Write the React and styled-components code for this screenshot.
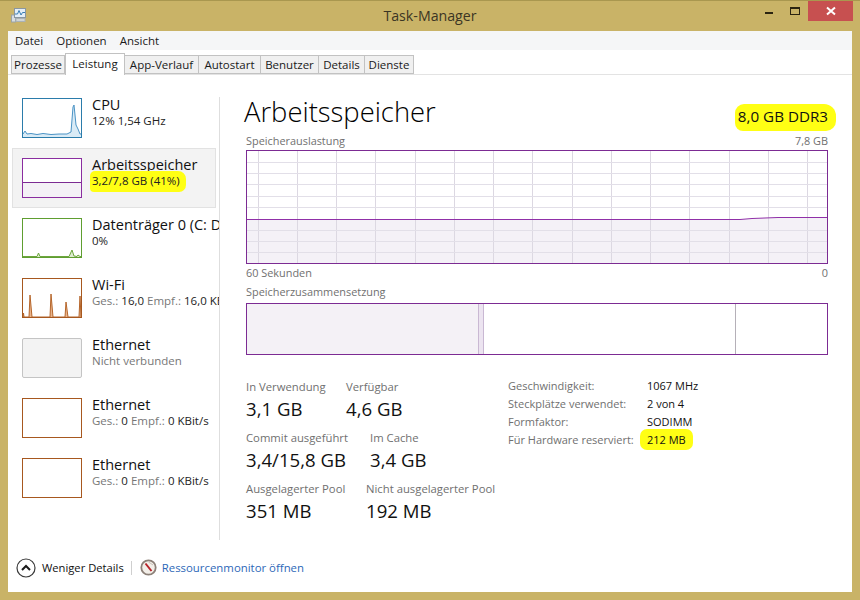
import React from "react";
import styled, { createGlobalStyle } from "styled-components";

const GlobalStyle = createGlobalStyle`
  html, body {
    margin: 0;
    padding: 0;
    background: #c9b367;
  }
  body {
    font-family: "Open Sans", "Noto Sans", "Liberation Sans", sans-serif;
    font-size: 11.5px;
    color: #111;
    overflow: hidden;
  }
`;

const Window = styled.div`
  width: 860px;
  height: 600px;
  box-sizing: border-box;
  display: flex;
  flex-direction: column;
  background: #c9b367;
  border-top: 1px solid #a9974f;
`;

const TitleBar = styled.div`
  height: 30px;
  flex: none;
  display: grid;
  grid-template-columns: 1fr auto 1fr;
`;

const AppIcon = styled.div`
  padding: 5px 0 0 10px;
`;

const TitleText = styled.div`
  font-size: 14.2px;
  line-height: 29px;
  color: #3b3524;
`;

const Controls = styled.div`
  display: flex;
  justify-content: flex-end;
  padding-right: 7px;
`;

const ControlButton = styled.div`
  width: ${(p) => p.$w}px;
  height: 20px;
  display: flex;
  align-items: center;
  justify-content: center;
  background: ${(p) => (p.$close ? "#c75050" : "transparent")};
`;

const Body = styled.div`
  flex: 1;
  margin: 0 8px 8px;
  min-height: 0;
  display: flex;
  flex-direction: column;
  background: #fff;
`;

const MenuBar = styled.div`
  height: 19px;
  flex: none;
  display: flex;
  align-items: center;
  gap: 13px;
  padding-left: 7px;
  background: #f5f6f7;
  font-size: 11.5px;
  color: #1a1a1a;
`;

const Tabs = styled.div`
  height: 25px;
  flex: none;
  display: flex;
  align-items: flex-end;
  padding-left: 3px;
  border-bottom: 1px solid #e3e3e3;
  box-sizing: border-box;
`;

const Tab = styled.div`
  width: ${(p) => p.$w}px;
  height: ${(p) => (p.$active ? 22 : 19)}px;
  box-sizing: border-box;
  margin-bottom: ${(p) => (p.$active ? -1 : 0)}px;
  padding-bottom: ${(p) => (p.$active ? 3 : 0)}px;
  display: flex;
  align-items: center;
  justify-content: center;
  font-size: 11.5px;
  color: #1a1a1a;
  background: ${(p) => (p.$active ? "#fff" : "#f0f0f0")};
  border: 1px solid #c2c2c2;
  border-bottom: ${(p) => (p.$active ? "none" : "1px solid #c2c2c2")};
  border-left-width: ${(p) => (p.$active ? 1 : 0)}px;
  &:first-child {
    border-left-width: 1px;
  }
`;

const Content = styled.div`
  flex: 1;
  min-height: 0;
  display: flex;
`;

const Sidebar = styled.div`
  width: 212px;
  height: 443px;
  flex: none;
  box-sizing: border-box;
  margin-top: 22px;
  padding-left: 4px;
  border-right: 1px solid #dedede;
`;

const SideList = styled.div`
  margin-top: -9px;
  display: flex;
  flex-direction: column;
`;

const SideItem = styled.div`
  width: 204px;
  height: 60px;
  box-sizing: border-box;
  display: flex;
  gap: 8px;
  padding: 6px 0 0 10px;
  background: ${(p) => (p.$selected ? "#f3f3f3" : "transparent")};
  outline: ${(p) => (p.$selected ? "1px solid #e2e2e2" : "none")};
  outline-offset: -1px;
`;

const MiniGraph = styled.div`
  width: 60px;
  height: 40px;
  flex: none;
  box-sizing: border-box;
  margin-top: 4px;
  border: 1px solid ${(p) => p.$color};
  border-radius: ${(p) => (p.$off ? 2 : 0)}px;
  background: ${(p) => (p.$off ? "#f3f3f3" : "#fff")};
  svg {
    display: block;
  }
`;

const SideText = styled.div`
  width: 129px;
  height: 48px;
  flex: none;
  padding-left: 2px;
  box-sizing: border-box;
  overflow: hidden;
  white-space: nowrap;
`;

const SideName = styled.div`
  font-size: 14.5px;
  line-height: 21px;
  color: #111;
`;

const SideSub = styled.div`
  font-size: 11.5px;
  line-height: 16px;
  margin-top: -2px;
  color: ${(p) => (p.$muted ? "#777" : "#222")};
`;

const Muted = styled.span`
  color: #777;
`;

const Mark = styled.span`
  display: inline-block;
  background: #ffff14;
  border-radius: ${(p) => p.$radius || "6px"};
  padding: ${(p) => p.$pad};
  margin: ${(p) => p.$margin};
`;

const Main = styled.div`
  flex: 1;
  min-width: 0;
  padding: 19px 24px 0 26px;
`;

const TitleRow = styled.div`
  display: flex;
  justify-content: space-between;
  align-items: center;
  height: 34px;
  margin-bottom: 5px;
`;

const PageTitle = styled.div`
  font-size: 27.4px;
  font-weight: 300;
  margin-left: -2px;
  color: #000;
`;

const TypeLabel = styled.div`
  font-size: 15.2px;
  margin-top: 9px;
  color: #111;
`;

const GraphCaption = styled.div`
  display: flex;
  justify-content: space-between;
  height: 15px;
  margin-top: ${(p) => p.$top || 0}px;
  margin-bottom: ${(p) => p.$bottom || 0}px;
  font-size: 10.9px;
  line-height: 15px;
  color: #707070;
`;

const BigGraph = styled.div`
  height: 114px;
  box-sizing: border-box;
  border: 1px solid #7c2b93;
  svg {
    display: block;
  }
`;

const CompositionBar = styled.div`
  height: 52px;
  box-sizing: border-box;
  border: 1px solid #7c2b93;
  display: flex;
`;

const Segment = styled.div`
  width: ${(p) => p.$w}px;
  flex: ${(p) => (p.$grow ? 1 : "none")};
  box-sizing: border-box;
  background: ${(p) => p.$bg};
  border-right: ${(p) => (p.$line ? `1px solid ${p.$line}` : "none")};
`;

const Stats = styled.div`
  display: flex;
  margin-top: 24px;
`;

const StatColumn = styled.div`
  width: 262px;
  flex: none;
`;

const StatRow = styled.div`
  display: flex;
  height: 51px;
`;

const Stat = styled.div`
  width: ${(p) => p.$w}px;
  flex: none;
`;

const StatLabel = styled.div`
  font-size: 11.3px;
  line-height: 16px;
  color: #707070;
  white-space: nowrap;
`;

const StatValue = styled.div`
  font-size: 18.6px;
  line-height: 26px;
  margin-top: 1px;
  color: #111;
  white-space: nowrap;
`;

const Details = styled.div`
  display: grid;
  grid-template-columns: 139px auto;
  grid-auto-rows: 18px;
  align-items: center;
  align-self: flex-start;
  margin-top: -3px;
  font-size: 11px;
`;

const DetailLabel = styled.div`
  color: #707070;
  white-space: nowrap;
`;

const DetailValue = styled.div`
  color: #111;
  white-space: nowrap;
`;

const Footer = styled.div`
  height: 52px;
  flex: none;
  display: flex;
  align-items: center;
  padding: 3px 0 0 8px;
  box-sizing: border-box;
  font-size: 11.2px;
`;

const FooterLabel = styled.div`
  margin-left: 6px;
`;

const FooterDivider = styled.div`
  width: 1px;
  height: 14px;
  background: #cfcfcf;
  margin: 0 8px 0 7px;
`;

const FooterLink = styled.div`
  margin-left: 5px;
  font-size: 11.4px;
  color: #2d68b8;
`;

const TABS = [
  ["Prozesse", 54],
  ["Leistung", 60, true],
  ["App-Verlauf", 74],
  ["Autostart", 62],
  ["Benutzer", 58],
  ["Details", 46],
  ["Dienste", 49],
];

const GRID_X = Array.from({ length: 15 }, (_, i) => 10.5 + i * 39.27);
const GRID_Y = [11, 22, 33, 45, 56, 79, 90, 101];

function Spikes({ color, fill, points }) {
  const d = points.join(" ");
  return (
    <svg width="58" height="38" viewBox="0 0 58 38">
      <polygon points={`0,38 ${d} 58,38`} fill={fill} />
      <polyline points={d} fill="none" stroke={color} strokeWidth="1" />
    </svg>
  );
}

function CpuGraph() {
  return (
    <Spikes
      color="#4a93c5"
      fill="#d9ebf6"
      points={[
        "0,35", "2,32", "4,35", "8,34.5", "14,35.5", "20,34.5", "28,35.5", "36,35", "44,35", "48,33", "50,8", "51,6", "53,26", "55,30", "57,35", "58,35",
      ]}
    />
  );
}

function DiskGraph() {
  return (
    <Spikes
      color="#6da53e"
      fill="#dcebcf"
      points={[
        "0,37.5", "14,37.5", "15.5,34", "17,37.5", "46,37.5", "49,31", "51,37", "54,37.5", "55,36", "57,37.5", "58,37.5",
      ]}
    />
  );
}

function WifiGraph() {
  return (
    <Spikes
      color="#b5652a"
      fill="#e9b48c"
      points={[
        "0,38", "0.5,34", "1,38", "6,38", "7,16", "9,38", "27,38", "28,15", "30,38", "42,38", "43,23", "45,38", "56,38", "57,17", "58,38",
      ]}
    />
  );
}

function MemoryMini() {
  return (
    <svg width="58" height="38" viewBox="0 0 58 38">
      <rect x="0" y="24" width="58" height="14" fill="#f4f1f6" />
      <line x1="0" y1="23.5" x2="58" y2="23.5" stroke="#7c2b93" />
    </svg>
  );
}

function MemoryGraph() {
  const top = "0,68.5 493,68.5 505,67.5 531,66.5 580,66.5";
  return (
    <svg width="580" height="112" viewBox="0 0 580 112">
      <polygon points={`${top} 580,112 0,112`} fill="#f4f1f7" />
      {GRID_X.map((x) => (
        <line key={x} x1={Math.round(x) + 0.5} y1="0" x2={Math.round(x) + 0.5} y2="112" stroke="#dcd8e2" />
      ))}
      {GRID_Y.map((y) => (
        <line key={y} x1="0" y1={y + 0.5} x2="580" y2={y + 0.5} stroke="#e2dfe8" />
      ))}
      <polyline points={top} fill="none" stroke="#9030a8" strokeWidth="1" />
    </svg>
  );
}

function TaskIcon() {
  return (
    <svg width="18" height="18" viewBox="0 0 18 18">
      <rect x="1.5" y="9" width="4" height="7" fill="#d8dde0" stroke="#9aa4a8" />
      <rect x="4.5" y="2.5" width="11" height="9" fill="#e4eef6" stroke="#8a97a0" />
      <polyline points="5,8 7.5,8 9,4.5 11,9 12.5,6.5 15,6.5" fill="none" stroke="#3a7fb5" />
      <rect x="6" y="12.5" width="9" height="3" fill="#cfd4d6" stroke="#aab2b5" />
    </svg>
  );
}

function CollapseIcon() {
  return (
    <svg width="20" height="20" viewBox="0 0 20 20">
      <circle cx="10" cy="10" r="9" fill="#fff" stroke="#3a3a3a" strokeWidth="1.2" />
      <polyline points="6,12 10,8 14,12" fill="none" stroke="#1a1a1a" strokeWidth="2" />
    </svg>
  );
}

function MonitorIcon() {
  return (
    <svg width="17" height="17" viewBox="0 0 17 17">
      <circle cx="8.5" cy="8.5" r="7.2" fill="#f3efe9" stroke="#8c8078" strokeWidth="1.8" />
      <line x1="5.5" y1="4.5" x2="11.5" y2="12" stroke="#b8232a" strokeWidth="2" />
      <line x1="8.5" y1="3" x2="13" y2="6" stroke="#c9c2ba" strokeWidth="1" />
    </svg>
  );
}

export default function App() {
  return (
    <>
      <GlobalStyle />
      <Window>
        <TitleBar>
          <AppIcon>
            <TaskIcon />
          </AppIcon>
          <TitleText>Task-Manager</TitleText>
          <Controls>
            <ControlButton $w={26}>
              <svg width="10" height="10" viewBox="0 0 10 10">
                <rect x="1" y="6" width="8" height="2" fill="#2b2410" />
              </svg>
            </ControlButton>
            <ControlButton $w={26}>
              <svg width="12" height="10" viewBox="0 0 12 10">
                <rect x="1.5" y="1.5" width="9" height="7" fill="none" stroke="#2b2410" />
                <rect x="1" y="1" width="10" height="2" fill="#2b2410" />
              </svg>
            </ControlButton>
            <ControlButton $w={45} $close>
              <svg width="10" height="10" viewBox="0 0 10 10">
                <path d="M1 1.5 L9 8.5 M9 1.5 L1 8.5" stroke="#fff" strokeWidth="2" />
              </svg>
            </ControlButton>
          </Controls>
        </TitleBar>
        <Body>
          <MenuBar>
            <span>Datei</span>
            <span>Optionen</span>
            <span>Ansicht</span>
          </MenuBar>
          <Tabs>
            {TABS.map(([label, w, active]) => (
              <Tab key={label} $w={w} $active={active}>
                {label}
              </Tab>
            ))}
          </Tabs>
          <Content>
            <Sidebar>
              <SideList>
                <SideItem>
                  <MiniGraph $color="#2b7cab">
                    <CpuGraph />
                  </MiniGraph>
                  <SideText>
                    <SideName>CPU</SideName>
                    <SideSub>12% 1,54 GHz</SideSub>
                  </SideText>
                </SideItem>
                <SideItem $selected>
                  <MiniGraph $color="#8a2da0">
                    <MemoryMini />
                  </MiniGraph>
                  <SideText>
                    <SideName>Arbeitsspeicher</SideName>
                    <SideSub>
                      <Mark $pad="2px 6px 3px 2px" $margin="-2px -6px -3px -2px" $radius="5px 8px 7px 4px">
                        3,2/7,8 GB (41%)
                      </Mark>
                    </SideSub>
                  </SideText>
                </SideItem>
                <SideItem>
                  <MiniGraph $color="#5f9e30">
                    <DiskGraph />
                  </MiniGraph>
                  <SideText>
                    <SideName>Datenträger 0 (C: D:)</SideName>
                    <SideSub>0%</SideSub>
                  </SideText>
                </SideItem>
                <SideItem>
                  <MiniGraph $color="#a7581f">
                    <WifiGraph />
                  </MiniGraph>
                  <SideText>
                    <SideName>Wi-Fi</SideName>
                    <SideSub>
                      <Muted>Ges.:</Muted> 16,0 <Muted>Empf.:</Muted> 16,0 KBit/s
                    </SideSub>
                  </SideText>
                </SideItem>
                <SideItem>
                  <MiniGraph $color="#c4c4c4" $off />
                  <SideText>
                    <SideName>Ethernet</SideName>
                    <SideSub $muted>Nicht verbunden</SideSub>
                  </SideText>
                </SideItem>
                <SideItem>
                  <MiniGraph $color="#a7581f" />
                  <SideText>
                    <SideName>Ethernet</SideName>
                    <SideSub>
                      <Muted>Ges.:</Muted> 0 <Muted>Empf.:</Muted> 0 KBit/s
                    </SideSub>
                  </SideText>
                </SideItem>
                <SideItem>
                  <MiniGraph $color="#a7581f" />
                  <SideText>
                    <SideName>Ethernet</SideName>
                    <SideSub>
                      <Muted>Ges.:</Muted> 0 <Muted>Empf.:</Muted> 0 KBit/s
                    </SideSub>
                  </SideText>
                </SideItem>
              </SideList>
            </Sidebar>
            <Main>
              <TitleRow>
                <PageTitle>Arbeitsspeicher</PageTitle>
                <TypeLabel>
                  <Mark $radius="9px 12px 10px 8px" $pad="2px 8px 5px 3px" $margin="-2px -8px -5px -3px">
                    8,0 GB DDR3
                  </Mark>
                </TypeLabel>
              </TitleRow>
              <GraphCaption $bottom={2}>
                <span>Speicherauslastung</span>
                <span>7,8 GB</span>
              </GraphCaption>
              <BigGraph>
                <MemoryGraph />
              </BigGraph>
              <GraphCaption $top={1}>
                <span>60 Sekunden</span>
                <span>0</span>
              </GraphCaption>
              <GraphCaption $top={4} $bottom={4}>
                <span>Speicherzusammensetzung</span>
              </GraphCaption>
              <CompositionBar>
                <Segment $w={232} $bg="#f4f1f6" $line="#c9b8d3" />
                <Segment $w={5} $bg="#ece4f0" $line="#c9b8d3" />
                <Segment $w={252} $bg="#fff" $line="#b5b0b8" />
                <Segment $grow $bg="#fff" />
              </CompositionBar>
              <Stats>
                <StatColumn>
                  <StatRow>
                    <Stat $w={100}>
                      <StatLabel>In Verwendung</StatLabel>
                      <StatValue>3,1 GB</StatValue>
                    </Stat>
                    <Stat $w={120}>
                      <StatLabel>Verfügbar</StatLabel>
                      <StatValue>4,6 GB</StatValue>
                    </Stat>
                  </StatRow>
                  <StatRow>
                    <Stat $w={124}>
                      <StatLabel>Commit ausgeführt</StatLabel>
                      <StatValue>3,4/15,8 GB</StatValue>
                    </Stat>
                    <Stat $w={120}>
                      <StatLabel>Im Cache</StatLabel>
                      <StatValue>3,4 GB</StatValue>
                    </Stat>
                  </StatRow>
                  <StatRow>
                    <Stat $w={120}>
                      <StatLabel>Ausgelagerter Pool</StatLabel>
                      <StatValue>351 MB</StatValue>
                    </Stat>
                    <Stat $w={130}>
                      <StatLabel>Nicht ausgelagerter Pool</StatLabel>
                      <StatValue>192 MB</StatValue>
                    </Stat>
                  </StatRow>
                </StatColumn>
                <Details>
                  <DetailLabel>Geschwindigkeit:</DetailLabel>
                  <DetailValue>1067 MHz</DetailValue>
                  <DetailLabel>Steckplätze verwendet:</DetailLabel>
                  <DetailValue>2 von 4</DetailValue>
                  <DetailLabel>Formfaktor:</DetailLabel>
                  <DetailValue>SODIMM</DetailValue>
                  <DetailLabel>Für Hardware reserviert:</DetailLabel>
                  <DetailValue>
                    <Mark $radius="7px" $pad="3px 7px 3px 7px" $margin="-3px -7px -3px -7px">
                      212 MB
                    </Mark>
                  </DetailValue>
                </Details>
              </Stats>
            </Main>
          </Content>
          <Footer>
            <CollapseIcon />
            <FooterLabel>Weniger Details</FooterLabel>
            <FooterDivider />
            <MonitorIcon />
            <FooterLink>Ressourcenmonitor öffnen</FooterLink>
          </Footer>
        </Body>
      </Window>
    </>
  );
}
